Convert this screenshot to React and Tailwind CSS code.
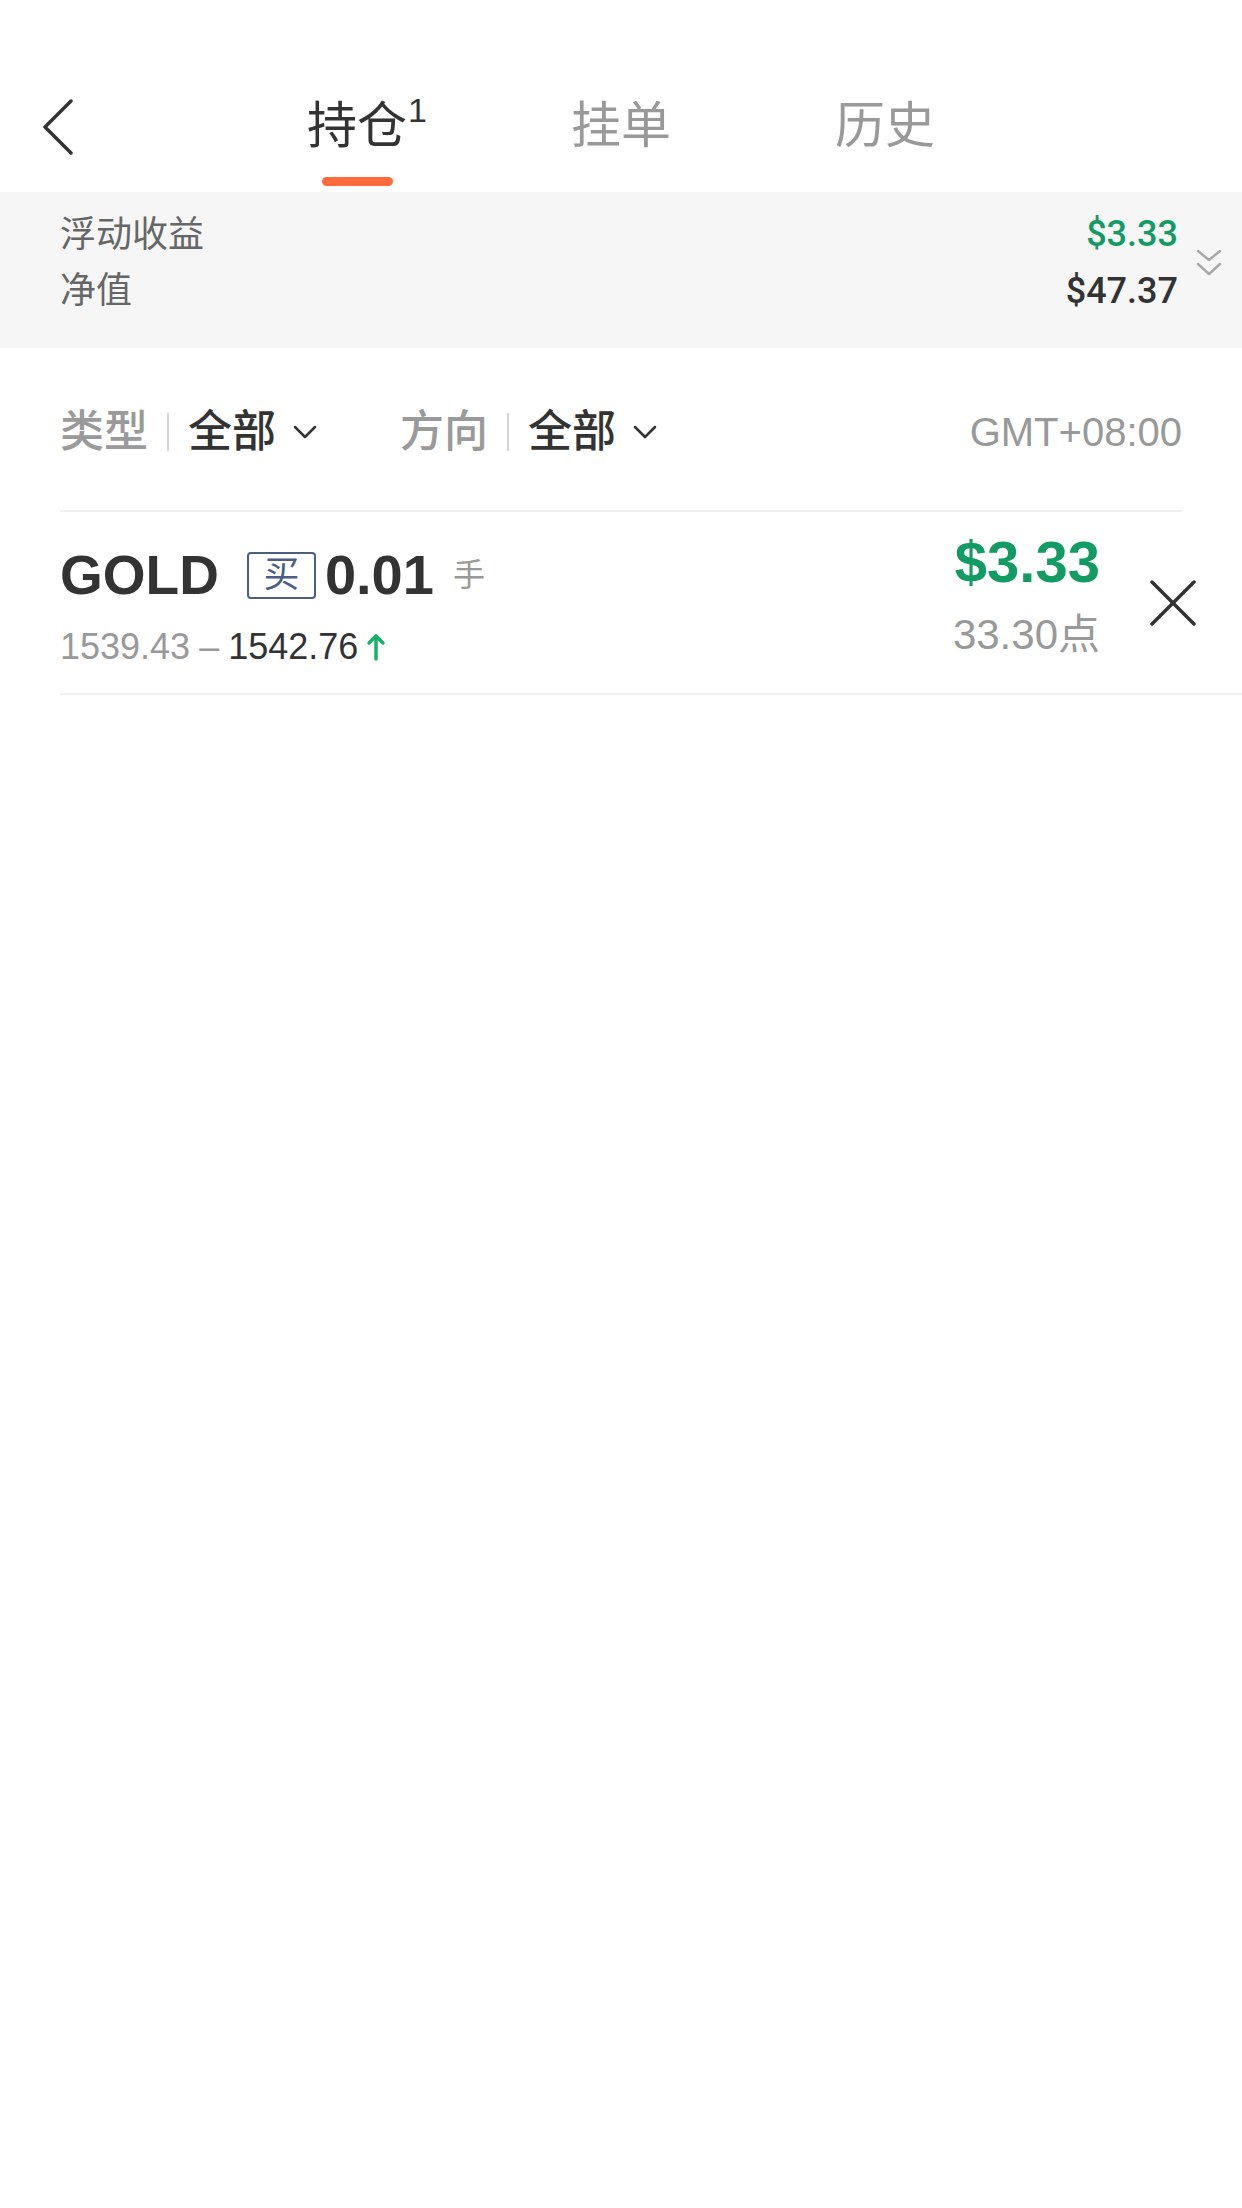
import React from "react";

function BackIcon() {
  return (
    <svg width="32" height="56" viewBox="0 0 32 56" fill="none">
      <polyline points="29,2 3,28 29,54" stroke="#333" strokeWidth="3.5" strokeLinecap="round" strokeLinejoin="round" />
    </svg>
  );
}

function SmallChevron() {
  return (
    <svg width="24" height="14" viewBox="0 0 24 14" fill="none">
      <polyline points="2,2 12,12 22,2" stroke="#333" strokeWidth="2.5" strokeLinecap="round" strokeLinejoin="round" />
    </svg>
  );
}

function DoubleChevron() {
  return (
    <svg width="26" height="28" viewBox="0 0 26 28" fill="none">
      <polyline points="2,2 13,11 24,2" stroke="#a8a8a8" strokeWidth="2.5" strokeLinecap="round" strokeLinejoin="round" />
      <polyline points="2,15 13,25 24,15" stroke="#a8a8a8" strokeWidth="2.5" strokeLinecap="round" strokeLinejoin="round" />
    </svg>
  );
}

function CloseIcon() {
  return (
    <svg width="46" height="46" viewBox="0 0 46 46" fill="none">
      <line x1="2" y1="2" x2="44" y2="44" stroke="#333" strokeWidth="3.5" strokeLinecap="round" />
      <line x1="44" y1="2" x2="2" y2="44" stroke="#333" strokeWidth="3.5" strokeLinecap="round" />
    </svg>
  );
}

function UpArrow() {
  return (
    <svg width="20" height="28" viewBox="0 0 20 28" fill="none">
      <line x1="10" y1="3" x2="10" y2="26" stroke="#17b26a" strokeWidth="3.5" strokeLinecap="round" />
      <polyline points="3,10 10,3 17,10" stroke="#17b26a" strokeWidth="3.5" strokeLinecap="round" strokeLinejoin="round" />
    </svg>
  );
}

function Tab({ label, active, badge }) {
  return (
    <div className="w-[264px] flex flex-col items-center">
      <div className={"relative h-[50px] text-[50px] leading-[50px] " + (active ? "text-[#333333]" : "text-[#999999]")}>
        {label}
        {badge && (
          <span className="absolute left-full top-[-8px] ml-[1px] text-[34px] leading-[34px] text-[#333333]">{badge}</span>
        )}
      </div>
      <div className={"mt-[26px] w-[71px] h-[9px] rounded-full " + (active ? "bg-[#ff6b3b]" : "bg-transparent")} />
    </div>
  );
}

function Filter({ label }) {
  return (
    <div className="flex items-center">
      <span className="text-[44px] leading-[44px] font-medium text-[#9a9a9a]">{label}</span>
      <span className="ml-[19px] mr-[19px] w-[2px] h-[38px] bg-[#d4d4d4]" />
      <span className="text-[44px] leading-[44px] font-medium text-[#333333]">全部</span>
      <span className="ml-[17px] flex items-center"><SmallChevron /></span>
    </div>
  );
}

export default function App() {
  return (
    <div className="w-[1242px] min-h-[2208px] bg-white font-['Liberation_Sans','Noto_Sans_CJK_SC',sans-serif]">
      {/* Header */}
      <header className="h-[192px] pt-[101px] grid grid-cols-[1fr_auto_1fr] items-start">
        <div className="pl-[42px] mt-[-2px]">
          <BackIcon />
        </div>
        <div className="flex">
          <Tab label="持仓" active badge="1" />
          <Tab label="挂单" />
          <Tab label="历史" />
        </div>
        <div />
      </header>

      {/* Summary band */}
      <section className="h-[156px] bg-[#f6f6f6] pl-[60px] pr-[20px] pt-[14px] flex items-start justify-between">
        <div className="flex flex-col pt-[1px] text-[36px] leading-[56px] text-[#666666]">
          <span>浮动收益</span>
          <span>净值</span>
        </div>
        <div className="flex items-center gap-[18px]">
          <div className="flex flex-col items-end font-['Roboto',sans-serif] font-medium text-[36px] leading-[57px]">
            <span className="text-[#129b62]">$3.33</span>
            <span className="text-[#333333]">$47.37</span>
          </div>
          <DoubleChevron />
        </div>
      </section>

      {/* Filters */}
      <div className="mx-[60px] h-[164px] pt-[6px] flex items-center justify-between border-b-2 border-[#f0f0f0]">
        <div className="flex items-center gap-[83px]">
          <Filter label="类型" />
          <Filter label="方向" />
        </div>
        <span className="text-[40px] leading-[40px] text-[#999999]">GMT+08:00</span>
      </div>

      {/* Position row */}
      <div className="ml-[60px] h-[183px] pr-[46px] flex items-center border-b-2 border-[#f0f0f0]">
        <div className="flex-1 flex flex-col pt-[9px]">
          <div className="h-[60px] flex items-center">
            <span className="text-[55px] leading-[60px] font-bold text-[#333333]">GOLD</span>
            <span className="ml-[28px] w-[69px] h-[47px] border-2 border-[#4b5e84] rounded-[4px] flex items-center justify-center text-[36px] leading-[36px] text-[#4b5e84]">买</span>
            <span className="ml-[9px] text-[56px] leading-[60px] font-bold text-[#333333]">0.01</span>
            <span className="ml-[19px] text-[32px] leading-[32px] text-[#999999]">手</span>
          </div>
          <div className="mt-[20px] h-[44px] flex items-center text-[36px] leading-[44px]">
            <span className="text-[#999999]">1539.43</span>
            <span className="ml-[9px] text-[#999999]">–</span>
            <span className="ml-[9px] text-[#333333]">1542.76</span>
            <span className="ml-[8px] flex items-center"><UpArrow /></span>
          </div>
        </div>
        <div className="flex flex-col items-end pb-[16px]">
          <span className="h-[60px] text-[58px] leading-[60px] font-bold text-[#129b62]">$3.33</span>
          <span className="mt-[21px] h-[44px] text-[42px] leading-[44px] text-[#999999]">33.30点</span>
        </div>
        <div className="ml-[50px] flex items-center">
          <CloseIcon />
        </div>
      </div>
    </div>
  );
}
